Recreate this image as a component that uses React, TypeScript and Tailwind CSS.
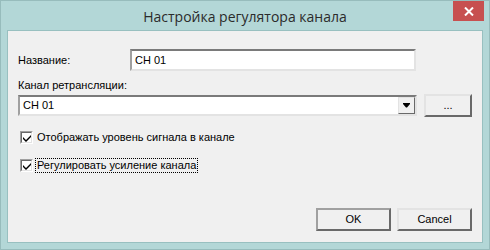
import React from "react";

const font = { fontFamily: '"Liberation Sans", Arial, sans-serif' };

function Check({ label, focus }: { label: string; focus?: boolean }) {
  return (
    <div className="flex items-center h-[15px]">
      <div className="ml-[2px] w-[13px] h-[13px] bg-white border border-t-[#a0a0a0] border-l-[#a0a0a0] border-r-white border-b-white flex items-center justify-center">
        <div className="w-[11px] h-[11px] border border-t-[#696969] border-l-[#696969] border-r-[#e3e3e3] border-b-[#e3e3e3] flex items-center justify-center">
          <svg width="8" height="8" viewBox="0 0 8 8">
            <path d="M0 3 L0 5 L3 8 L8 3 L8 1 L3 6 Z" fill="#000" />
          </svg>
        </div>
      </div>
      <span
        className={
          "ml-[3px] px-[1px] text-[11px] leading-[13px] text-black " +
          (focus ? "outline outline-1 outline-dotted outline-black" : "")
        }
      >
        {label}
      </span>
    </div>
  );
}

function Btn({ children, def }: { children: React.ReactNode; def?: boolean }) {
  return (
    <div
      className={
        "w-[75px] h-[23px] flex items-center justify-center text-[11px] text-black bg-[#f0f0f0] border-2 " +
        (def
          ? "border-t-[#a0a0a0] border-l-[#a0a0a0] border-r-[#696969] border-b-[#696969]"
          : "border-t-[#e3e3e3] border-l-[#e3e3e3] border-r-[#696969] border-b-[#696969]")
      }
    >
      {children}
    </div>
  );
}

export default function App() {
  return (
    <div className="w-[490px] h-[250px] bg-[#b3d7d7] border border-[#97bcbc] flex flex-col" style={font}>
      <div className="relative h-[29px] flex items-center justify-center">
        <span className="text-[14px] text-[#2b2b2b] mt-[1px]" style={{ fontFamily: '"Open Sans", "Noto Sans", sans-serif' }}>
          Настройка регулятора канала
        </span>
        <div className="absolute right-[5px] top-0 w-[31px] h-[20px] bg-[#c75050] flex items-center justify-center">
          <svg width="10" height="9" viewBox="0 0 10 9">
            <path d="M1 0.5 L9 8.5 M9 0.5 L1 8.5" stroke="#fff" strokeWidth="2" />
          </svg>
        </div>
      </div>
      <div className="mx-[6px] h-[213px] border border-[#98c0c0] bg-[#f0f0f0] pl-[10px] pr-[10px] flex flex-col">
        <div className="mt-[18px] flex items-center h-[22px]">
          <span className="w-[112px] text-[11px] text-black">Название:</span>
          <div className="w-[286px] h-[22px] bg-white border-2 border-t-[#7a7a7a] border-l-[#a0a0a0] border-r-[#e3e3e3] border-b-[#e3e3e3] flex items-center pl-[3px] text-[11px] text-black">
            CH 01
          </div>
        </div>
        <div className="mt-[7px] h-[14px] text-[11px] leading-[14px] text-black">Канал ретрансляции:</div>
        <div className="mt-[2px] flex items-center h-[23px]">
          <div className="w-[399px] h-[21px] bg-white border-2 border-t-[#7a7a7a] border-l-[#a0a0a0] border-r-[#e3e3e3] border-b-[#e3e3e3] flex items-center">
            <span className="flex-1 pl-[3px] text-[11px] text-black">CH 01</span>
            <div className="w-[17px] h-[17px] bg-[#f0f0f0] border border-t-[#e3e3e3] border-l-[#e3e3e3] border-r-[#696969] border-b-[#696969] flex items-center justify-center">
              <svg width="7" height="5" viewBox="0 0 7 5">
                <path d="M0 0 H7 V1 L4 4.5 H3 L0 1 Z" fill="#000" />
              </svg>
            </div>
          </div>
          <div className="ml-[7px] w-[48px] h-[23px] bg-[#f0f0f0] border-2 border-t-[#e3e3e3] border-l-[#e3e3e3] border-r-[#696969] border-b-[#696969] flex items-center justify-center text-[11px] text-black">
            ...
          </div>
        </div>
        <div className="mt-[13px]">
          <Check label="Отображать уровень сигнала в канале" />
        </div>
        <div className="mt-[13px]">
          <Check label="Регулировать усиление канала" focus />
        </div>
        <div className="mt-[35px] flex justify-end gap-[6px]">
          <Btn def>OK</Btn>
          <Btn>Cancel</Btn>
        </div>
      </div>
    </div>
  );
}
